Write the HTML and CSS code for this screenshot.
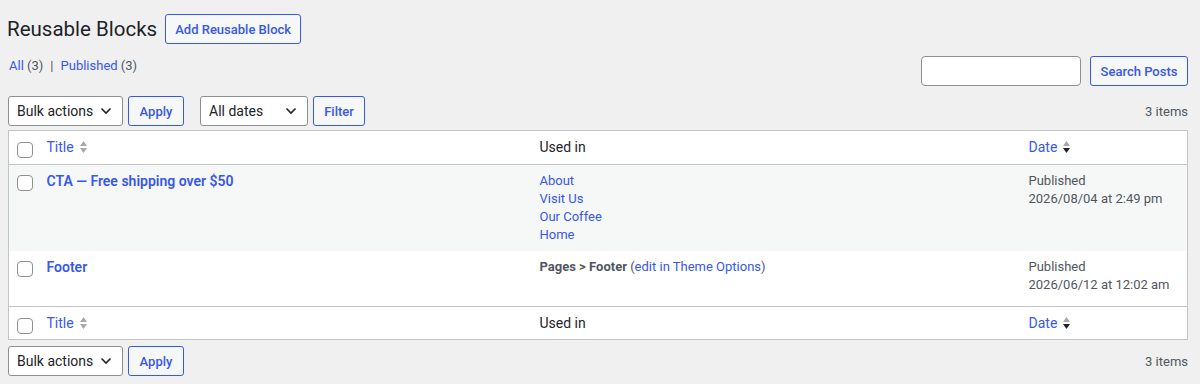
FILE: index.html
```html
<!DOCTYPE html>
<html lang="en">

<head>
    <meta charset="UTF-8">
    <meta name="viewport" content="width=device-width, initial-scale=1.0">
    <title>Reusable Blocks</title>

    <link rel="stylesheet" href="styles.css">
</head>

<body>
    <div class="wrap">
        <div class="page-head">
            <h1>Reusable Blocks</h1>
            <a href="#" class="button">Add Reusable Block</a>
        </div>

        <div class="filters">
            <ul class="subsubsub">
                <li><a href="#">All</a> <span>(3)</span></li>
                <li class="sep">|</li>
                <li><a href="#">Published</a> <span>(3)</span></li>
            </ul>
            <div class="search-box">
                <input type="search">
                <button class="button">Search Posts</button>
            </div>
        </div>

        <div class="tablenav">
            <div class="select bulk">
                <span>Bulk actions</span>
                <svg width="12" height="8" viewBox="0 0 12 8"><path d="M1.5 1.5l4.5 4.5 4.5-4.5" fill="none" stroke="#1d2327" stroke-width="1.6"/></svg>
            </div>
            <button class="button apply">Apply</button>
            <div class="select dates">
                <span>All dates</span>
                <svg width="12" height="8" viewBox="0 0 12 8"><path d="M1.5 1.5l4.5 4.5 4.5-4.5" fill="none" stroke="#1d2327" stroke-width="1.6"/></svg>
            </div>
            <button class="button filter">Filter</button>
            <span class="displaying-num">3 items</span>
        </div>

        <table class="list">
            <colgroup>
                <col class="col-check">
                <col class="col-title">
                <col class="col-used">
                <col class="col-date">
            </colgroup>
            <thead>
                <tr>
                    <th class="check"><span class="checkbox"></span></th>
                    <th><a href="#" class="sort-link">Title
                        <svg width="9" height="14" viewBox="0 0 9 14"><path d="M4.5 1 8 6H1z" fill="#a7aaad"/><path d="M1 8h7l-3.5 5z" fill="#a7aaad"/></svg></a></th>
                    <th>Used in</th>
                    <th><a href="#" class="sort-link">Date
                        <svg width="9" height="14" viewBox="0 0 9 14"><path d="M4.5 1 8 6H1z" fill="#a7aaad"/><path d="M1 8h7l-3.5 5z" fill="#1d2327"/></svg></a></th>
                </tr>
            </thead>
            <tbody>
                <tr class="alt">
                    <td class="check"><span class="checkbox"></span></td>
                    <td>
                        <a href="#" class="row-title">CTA — Free shipping over $50</a>
                        <div class="row-actions">Edit | Trash</div>
                    </td>
                    <td>
                        <a href="#" class="used">About</a>
                        <a href="#" class="used">Visit Us</a>
                        <a href="#" class="used">Our Coffee</a>
                        <a href="#" class="used">Home</a>
                    </td>
                    <td class="date">Published<br>2026/08/04 at 2:49 pm</td>
                </tr>
                <tr>
                    <td class="check"><span class="checkbox"></span></td>
                    <td>
                        <a href="#" class="row-title">Footer</a>
                        <div class="row-actions">Edit | Trash</div>
                    </td>
                    <td class="muted"><strong>Pages &gt; Footer</strong> (<a href="#">edit in Theme Options</a>)</td>
                    <td class="date">Published<br>2026/06/12 at 12:02 am</td>
                </tr>
            </tbody>
            <tfoot>
                <tr>
                    <th class="check"><span class="checkbox"></span></th>
                    <th><a href="#" class="sort-link">Title
                        <svg width="9" height="14" viewBox="0 0 9 14"><path d="M4.5 1 8 6H1z" fill="#a7aaad"/><path d="M1 8h7l-3.5 5z" fill="#a7aaad"/></svg></a></th>
                    <th>Used in</th>
                    <th><a href="#" class="sort-link">Date
                        <svg width="9" height="14" viewBox="0 0 9 14"><path d="M4.5 1 8 6H1z" fill="#a7aaad"/><path d="M1 8h7l-3.5 5z" fill="#1d2327"/></svg></a></th>
                </tr>
            </tfoot>
        </table>

        <div class="tablenav bottom">
            <div class="select bulk">
                <span>Bulk actions</span>
                <svg width="12" height="8" viewBox="0 0 12 8"><path d="M1.5 1.5l4.5 4.5 4.5-4.5" fill="none" stroke="#1d2327" stroke-width="1.6"/></svg>
            </div>
            <button class="button apply">Apply</button>
            <span class="displaying-num">3 items</span>
        </div>
    </div>
</body>

</html>
```

FILE: styles.css
```css
body {
    margin: 0;
    background-color: #f0f0f1;
    font-family: Roboto, "Noto Sans", sans-serif;
    font-size: 13px;
    color: #1d2327;
}

a {
    color: #3858e9;
    text-decoration: none;
}

.wrap {
    padding: 14px 12px 0 8px;
}

.page-head {
    display: flex;
    align-items: center;
    gap: 8px;
}

h1 {
    margin: 0 0 0 -1px;
    font-size: 20.5px;
    font-weight: 400;
    line-height: 30px;
}

.button {
    display: inline-flex;
    align-items: center;
    justify-content: center;
    height: 30px;
    box-sizing: border-box;
    padding: 0 10px;
    border: 1px solid #3858e9;
    border-radius: 3px;
    background-color: #f6f7f7;
    color: #3858e9;
    font-family: inherit;
    font-size: 13px;
    font-weight: 500;
    white-space: nowrap;
}

.page-head .button {
    width: 136px;
}

.filters {
    display: flex;
    justify-content: space-between;
    margin-top: 12px;
}

.subsubsub {
    display: flex;
    margin: 1px 0 0 1px;
    padding: 0;
    list-style: none;
    line-height: 18px;
    color: #50575e;
}

.subsubsub .sep {
    margin: 0 7px;
}

.search-box {
    display: flex;
    gap: 9px;
}

.search-box input {
    width: 160px;
    height: 30px;
    box-sizing: border-box;
    border: 1px solid #8c8f94;
    border-radius: 4px;
    background-color: #fff;
}

.search-box .button {
    width: 98px;
}

.tablenav {
    display: flex;
    align-items: center;
    height: 30px;
    margin-top: 10px;
}

.tablenav.bottom {
    margin-top: 6px;
}

.tablenav .button {
    margin-left: 5px;
}

.apply {
    width: 56px;
}

.filter {
    width: 52px;
}

.select {
    display: flex;
    align-items: center;
    justify-content: space-between;
    height: 30px;
    box-sizing: border-box;
    padding: 0 10px 0 8px;
    border: 1px solid #8c8f94;
    border-radius: 3px;
    background-color: #fff;
    font-size: 14px;
}

.bulk {
    width: 115px;
}

.dates {
    width: 108px;
    margin-left: 16px;
}

.displaying-num {
    margin-left: auto;
    color: #50575e;
}

.list {
    width: 100%;
    margin-top: 4px;
    border-collapse: collapse;
    table-layout: fixed;
    background-color: #fff;
    border: 1px solid #c3c4c7;
}

.col-check {
    width: 28px;
}

.col-title {
    width: 493px;
}

.col-used {
    width: 489px;
}

.list th {
    height: 20px;
    padding: 6px 10px 7px;
    text-align: left;
    font-size: 14px;
    font-weight: 400;
    line-height: 20px;
}

.list thead th {
    border-bottom: 1px solid #c3c4c7;
}

.list tfoot th {
    border-top: 1px solid #c3c4c7;
    padding-bottom: 6px;
}

.list td {
    padding: 7px 10px;
    vertical-align: top;
    line-height: 18px;
}

.list .check {
    padding: 11px 4px 0 8px;
    vertical-align: top;
}

.list tbody .check {
    padding-top: 10px;
}

.checkbox {
    display: block;
    width: 16px;
    height: 16px;
    box-sizing: border-box;
    border: 1px solid #8c8f94;
    border-radius: 4px;
    background-color: #fff;
}

.sort-link {
    display: inline-flex;
    align-items: center;
    gap: 5px;
    vertical-align: top;
    height: 20px;
}

.sort-link svg {
    display: block;
}

.alt td {
    background-color: #f6f7f7;
}

.row-title {
    font-size: 14px;
    font-weight: 600;
}

.row-actions {
    visibility: hidden;
    padding-top: 2px;
    line-height: 20px;
}

.used {
    display: block;
}

.muted,
.date {
    color: #50575e;
}
```
